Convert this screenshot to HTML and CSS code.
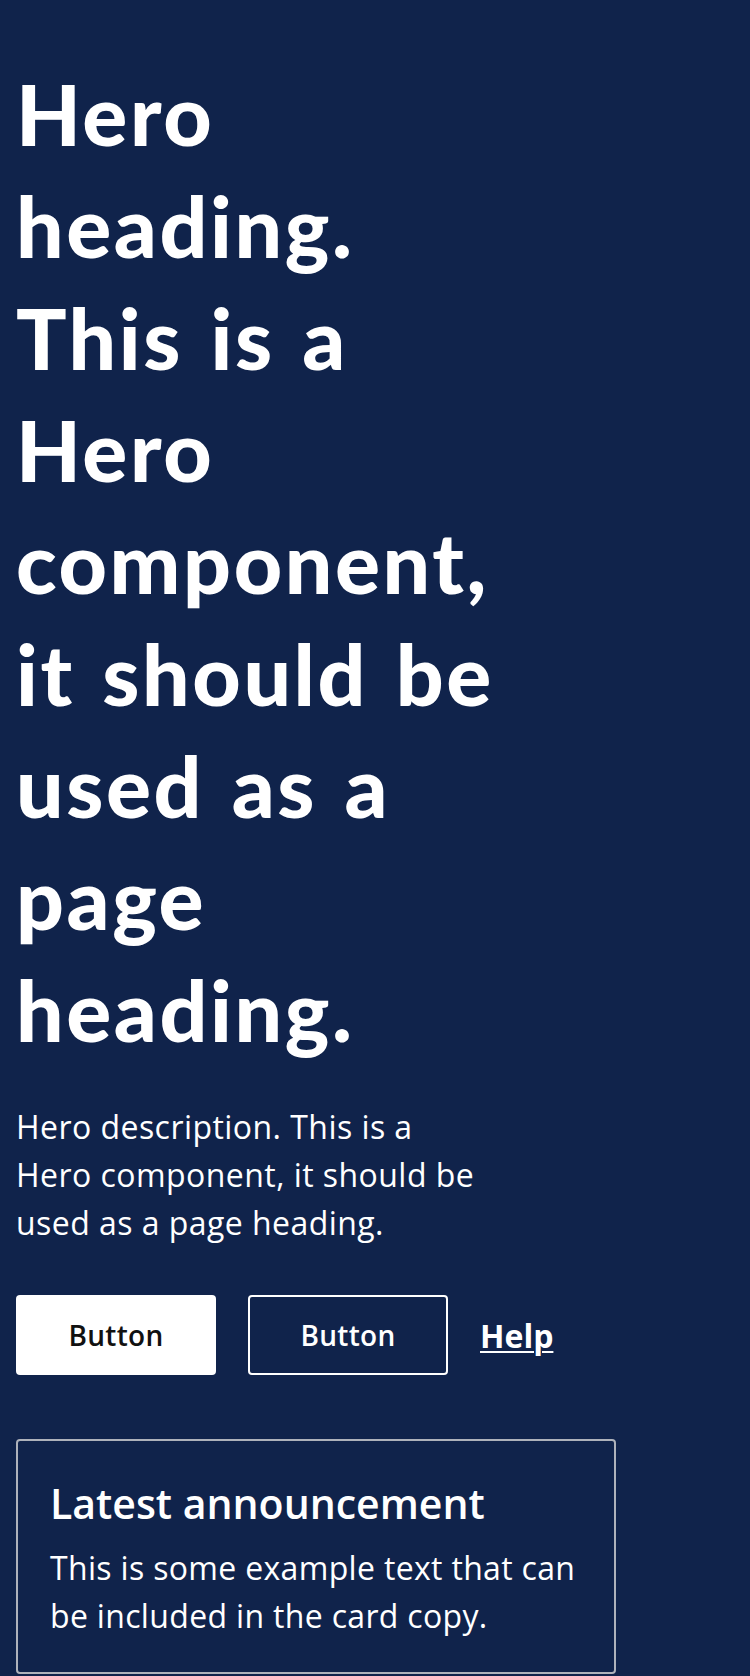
FILE: index.html
```html
<!DOCTYPE html>
<html lang="en">
<head>
<meta charset="utf-8">
<title>Hero</title>
<link rel="stylesheet" href="styles.css">
</head>
<body>
<section class="hero">
  <div class="hero-content">
    <h1 class="hero-title">Hero heading. This is a Hero component, it should be used as a page heading.</h1>
    <p class="hero-desc">Hero description. This is a Hero component, it should be used as a page heading.</p>
    <div class="hero-actions">
      <a class="btn btn-primary" href="#">Button</a>
      <a class="btn btn-secondary" href="#">Button</a>
      <a class="help-link" href="#">Help</a>
    </div>
  </div>
  <div class="card">
    <h2 class="card-title">Latest announcement</h2>
    <p class="card-text">This is some example text that can be included in the card copy.</p>
  </div>
</section>
</body>
</html>
```

FILE: styles.css
```css
html, body {
  margin: 0;
  padding: 0;
  background: #10234b;
}
body {
  font-family: "Open Sans", "Noto Sans", sans-serif;
  color: #ffffff;
}
.hero {
  padding: 58px 16px 0 16px;
}
.hero-title {
  max-width: 500px;
  margin: 0;
  font-family: Lato, "Open Sans", sans-serif;
  font-weight: 900;
  font-size: 84px;
  line-height: 112px;
  letter-spacing: 2.6px;
  word-spacing: 5px;
  color: #ffffff;
}
.hero-desc {
  max-width: 472px;
  margin: 37px 0 0 0;
  font-size: 32px;
  line-height: 48px;
  letter-spacing: 0.45px;
}
.hero-actions {
  margin-top: 48px;
  display: flex;
  align-items: center;
  gap: 32px;
}
.btn {
  flex: 0 0 auto;
  box-sizing: border-box;
  width: 200px;
  height: 80px;
  display: flex;
  align-items: center;
  justify-content: center;
  border-radius: 4px;
  font-size: 28px;
  font-weight: 600;
  text-decoration: none;
  letter-spacing: 0.3px;
}
.btn-primary {
  background: #ffffff;
  color: #111111;
}
.btn-secondary {
  border: 2px solid #ffffff;
  color: #ffffff;
}
.help-link {
  color: #ffffff;
  font-size: 32px;
  font-weight: 700;
  text-decoration: underline;
  text-decoration-thickness: 2px;
  text-underline-offset: 3px;
}
.card {
  box-sizing: border-box;
  width: 600px;
  margin-top: 64px;
  padding: 32px;
  border: 2px solid #aeb2bb;
  border-radius: 4px;
}
.card-title {
  margin: 0;
  font-size: 41px;
  font-weight: 600;
  line-height: 60px;
}
.card-text {
  margin: 11px 0 0 0;
  font-size: 32px;
  line-height: 48px;
  letter-spacing: 0.33px;
}
```
